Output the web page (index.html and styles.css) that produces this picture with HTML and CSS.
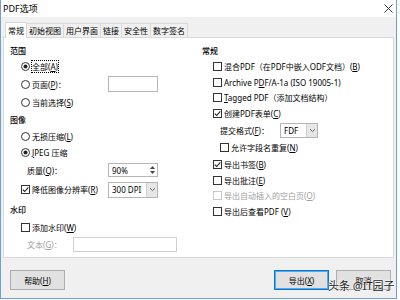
FILE: index.html
```html
<!DOCTYPE html>
<html lang="zh-CN">
<head>
    <meta charset="UTF-8">
    <title>PDF选项</title>
    <link rel="stylesheet" href="styles.css">
</head>
<body>
  <div class="window">
    <div class="titlebar">
        <span class="title">PDF选项</span>
        <svg class="close" width="9" height="9" viewBox="0 0 9 9"><path d="M0.5 0.5L8.5 8.5M8.5 0.5L0.5 8.5" stroke="#333" stroke-width="1"/></svg>
    </div>
    <div class="dialog">
        <div class="tabs">
            <div class="tab active">常规</div>
            <div class="tab">初始视图</div>
            <div class="tab">用户界面</div>
            <div class="tab">链接</div>
            <div class="tab">安全性</div>
            <div class="tab">数字签名</div>
        </div>
        <div class="panel">
            <div class="col col-left">
                <div class="heading">范围</div>
                <div class="opt">
                    <svg class="radio" viewBox="0 0 9 9"><circle cx="4.5" cy="4.5" r="4" class="ring"/><circle cx="4.5" cy="4.5" r="2" class="dot"/></svg>
                    <span class="focus">全部(<u>A</u>)</span>
                </div>
                <div class="opt">
                    <svg class="radio" viewBox="0 0 9 9"><circle cx="4.5" cy="4.5" r="4" class="ring"/></svg>
                    <span class="lbl-wide">页面(<u>P</u>)：</span>
                    <div class="textbox"></div>
                </div>
                <div class="opt">
                    <svg class="radio" viewBox="0 0 9 9"><circle cx="4.5" cy="4.5" r="4" class="ring"/></svg>
                    <span>当前选择(<u>S</u>)</span>
                </div>
                <div class="heading">图像</div>
                <div class="opt">
                    <svg class="radio" viewBox="0 0 9 9"><circle cx="4.5" cy="4.5" r="4" class="ring"/></svg>
                    <span>无损压缩(<u>L</u>)</span>
                </div>
                <div class="opt">
                    <svg class="radio" viewBox="0 0 9 9"><circle cx="4.5" cy="4.5" r="4" class="ring"/><circle cx="4.5" cy="4.5" r="2" class="dot"/></svg>
                    <span><u>J</u>PEG 压缩</span>
                </div>
                <div class="sub">
                    <span class="lbl-sub">质量(<u>Q</u>)：</span>
                    <div class="spin">
                        <span>90%</span>
                        <svg class="spin-arrows" width="9" height="12" viewBox="0 0 9 12"><path d="M2 5L4.5 2L7 5Z" fill="#444"/><path d="M2 7L4.5 10L7 7Z" fill="#444"/></svg>
                    </div>
                </div>
                <div class="opt">
                    <svg class="check" viewBox="0 0 9 9"><rect x="0.5" y="0.5" width="8" height="8" class="box"/><path d="M1.8 4.6L3.7 6.5L7.3 2.4" class="tick"/></svg>
                    <span class="lbl-wide">降低图像分辨率(<u>R</u>)</span>
                    <div class="select">
                        <span>300 DPI</span>
                        <div class="select-arrow"><svg width="7" height="5" viewBox="0 0 7 5"><path d="M1 1.2L3.5 3.6L6 1.2" fill="none" stroke="#666"/></svg></div>
                    </div>
                </div>
                <div class="heading">水印</div>
                <div class="opt">
                    <svg class="check" viewBox="0 0 9 9"><rect x="0.5" y="0.5" width="8" height="8" class="box"/></svg>
                    <span>添加水印(<u>W</u>)</span>
                </div>
                <div class="sub disabled">
                    <span class="lbl-text">文本(<u>G</u>)：</span>
                    <div class="textbox wide"></div>
                </div>
            </div>
            <div class="col col-right">
                <div class="heading">常规</div>
                <div class="opt">
                    <svg class="check" viewBox="0 0 9 9"><rect x="0.5" y="0.5" width="8" height="8" class="box"/></svg>
                    <span>混合PDF（在PDF中嵌入ODF文档）(<u>B</u>)</span>
                </div>
                <div class="opt">
                    <svg class="check" viewBox="0 0 9 9"><rect x="0.5" y="0.5" width="8" height="8" class="box"/></svg>
                    <span>Archive P<u>D</u>F/A-1a (ISO 19005-1)</span>
                </div>
                <div class="opt">
                    <svg class="check" viewBox="0 0 9 9"><rect x="0.5" y="0.5" width="8" height="8" class="box"/></svg>
                    <span><u>T</u>agged PDF（添加文档结构）</span>
                </div>
                <div class="opt">
                    <svg class="check" viewBox="0 0 9 9"><rect x="0.5" y="0.5" width="8" height="8" class="box"/><path d="M1.8 4.6L3.7 6.5L7.3 2.4" class="tick"/></svg>
                    <span>创建PDF表单(<u>C</u>)</span>
                </div>
                <div class="sub2">
                    <span class="lbl-format">提交格式(<u>F</u>)：</span>
                    <div class="select small">
                        <span>FDF</span>
                        <div class="select-arrow"><svg width="7" height="5" viewBox="0 0 7 5"><path d="M1 1.2L3.5 3.6L6 1.2" fill="none" stroke="#666"/></svg></div>
                    </div>
                </div>
                <div class="opt sub2">
                    <svg class="check" viewBox="0 0 9 9"><rect x="0.5" y="0.5" width="8" height="8" class="box"/></svg>
                    <span>允许字段名重复(<u>N</u>)</span>
                </div>
                <div class="opt">
                    <svg class="check" viewBox="0 0 9 9"><rect x="0.5" y="0.5" width="8" height="8" class="box"/><path d="M1.8 4.6L3.7 6.5L7.3 2.4" class="tick"/></svg>
                    <span>导出书签(<u>B</u>)</span>
                </div>
                <div class="opt">
                    <svg class="check" viewBox="0 0 9 9"><rect x="0.5" y="0.5" width="8" height="8" class="box"/></svg>
                    <span>导出批注(<u>E</u>)</span>
                </div>
                <div class="opt disabled">
                    <svg class="check" viewBox="0 0 9 9"><rect x="0.5" y="0.5" width="8" height="8" class="box"/></svg>
                    <span>导出自动插入的空白页(<u>O</u>)</span>
                </div>
                <div class="opt">
                    <svg class="check" viewBox="0 0 9 9"><rect x="0.5" y="0.5" width="8" height="8" class="box"/></svg>
                    <span>导出后查看PDF (<u>V</u>)</span>
                </div>
            </div>
        </div>
        <div class="buttons">
            <button class="btn">帮助(<u>H</u>)</button>
            <div class="spacer"></div>
            <button class="btn default">导出(<u>X</u>)</button>
            <button class="btn">取消</button>
        </div>
    </div>
  </div>
  <div class="watermark">头条 @IT园子</div>
</body>
</html>
```
FILE: styles.css
```css
body {
    margin: 0;
    background: #fff;
    font-family: "Noto Sans", "Noto Sans CJK SC", sans-serif;
    font-size: 8px;
    color: #000;
}

.window {
    width: 397px;
    height: 299px;
    box-sizing: border-box;
    border: 1px solid #6c9fd6;
    border-top: none;
    display: flex;
    flex-direction: column;
}

.titlebar {
    height: 17px;
    background: #fff;
    display: flex;
    align-items: center;
    justify-content: space-between;
    padding: 0 3px 0 2px;
}

.title {
    font-size: 9px;
}

.dialog {
    flex: 1;
    background: #f0f0f0;
    padding: 5px 2px 8px 2px;
    display: flex;
    flex-direction: column;
}

/* tabs */
.tabs {
    display: flex;
    align-items: flex-end;
    height: 15px;
    padding-left: 3px;
}

.tab {
    height: 13px;
    line-height: 13px;
    padding: 0 2px;
    border: 1px solid #d9d9d9;
    border-bottom: none;
    margin-left: -1px;
    background: #f0f0f0;
}

.tab.active {
    height: 15px;
    line-height: 15px;
    background: #fff;
    margin-bottom: -1px;
    position: relative;
    z-index: 1;
}

.panel {
    height: 221px;
    box-sizing: border-box;
    border: 1px solid #d9d9d9;
    background: #fff;
    display: flex;
    padding: 5px 0 0 6px;
}

.col {
    display: grid;
    align-items: center;
    align-content: start;
}

.col-left {
    width: 192px;
    grid-template-rows: 15px 17px 18px 18px 17px 16px 17px 18px 21px 19px 17px 17px;
}

.col-right {
    flex: 1;
    grid-template-rows: 15px 16px 16px 15px 17px 17px 17px 16px 16px 15px 16px;
}

.heading {
    font-weight: 500;
}

.opt,
.sub,
.sub2 {
    display: flex;
    align-items: center;
}

.opt {
    margin-left: 11px;
}

.sub {
    margin-left: 17px;
}

.sub2 {
    margin-left: 18px;
}

.radio,
.check {
    width: 9px;
    height: 9px;
    margin-right: 2px;
    flex: none;
}

.ring {
    fill: #fff;
    stroke: #333;
    stroke-width: 1;
}

.dot {
    fill: #222;
}

.box {
    fill: #fff;
    stroke: #333;
    stroke-width: 1;
}

.tick {
    fill: none;
    stroke: #222;
    stroke-width: 1.1;
}

.disabled {
    color: #a0a0a0;
}

.disabled .box {
    stroke: #c8c8c8;
}

.focus {
    outline: 1px dotted #000;
    outline-offset: 0;
}

.lbl-wide {
    width: 76px;
}

.lbl-sub {
    width: 81px;
}

.lbl-text {
    width: 46px;
}

.lbl-format {
    width: 60px;
}

/* inputs */
.textbox {
    width: 50px;
    height: 16px;
    box-sizing: border-box;
    border: 1px solid #b5b5b5;
    background: #fff;
}

.textbox.wide {
    width: 104px;
    height: 15px;
    border-color: #d0d0d0;
}

.spin {
    width: 50px;
    height: 14px;
    box-sizing: border-box;
    border: 1px solid #b5b5b5;
    display: flex;
    align-items: center;
    justify-content: space-between;
    padding-left: 3px;
}

.select {
    width: 50px;
    height: 16px;
    box-sizing: border-box;
    border: 1px solid #b5b5b5;
    display: flex;
    align-items: center;
    justify-content: space-between;
    padding-left: 3px;
}

.select.small {
    width: 38px;
    height: 15px;
}

.select-arrow {
    width: 10px;
    align-self: stretch;
    background: #e6e6e6;
    border-left: 1px solid #d0d0d0;
    display: flex;
    align-items: center;
    justify-content: center;
}

/* bottom buttons */
.buttons {
    display: flex;
    margin-top: 12px;
    padding: 0 3px 0 7px;
    gap: 7px;
}

.spacer {
    flex: 1;
}

.btn {
    width: 55px;
    height: 20px;
    box-sizing: border-box;
    border: 1px solid #adadad;
    background: #e1e1e1;
    font-family: inherit;
    font-size: 8px;
    color: #000;
    padding: 0;
}

.btn.default {
    border-color: #0078d7;
    box-shadow: inset 0 0 0 1px #5ea7e6;
}

.watermark {
    position: absolute;
    left: 328px;
    top: 277px;
    font-size: 11px;
    color: #222;
    text-shadow: 0 0 2px #fff, 0 0 2px #fff;
}
```
